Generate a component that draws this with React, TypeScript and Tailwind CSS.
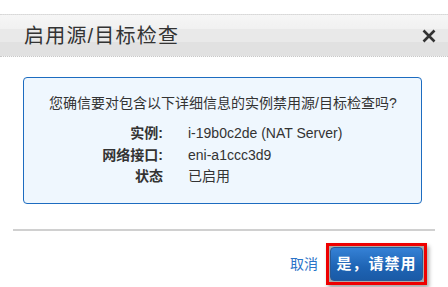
export default function App() {
  const font = { fontFamily: '"Liberation Sans", Arial, "Noto Sans CJK SC", sans-serif' };
  return (
    <div className="w-[448px] h-[287px] bg-white relative overflow-hidden" style={font}>
      <div className="h-[14px]" />
      <div className="h-[43px] border-t border-dotted border-t-[#d8d8d8] border-b border-b-[#c8c8c8] bg-[linear-gradient(#f6f6f6_0%,#f1f1f1_33%,#e9e9e9_34%,#e9e9e9_66%,#e1e1e1_67%,#e1e1e1_100%)] flex items-center justify-between pl-[24px] pr-[12px]">
        <span className="text-[20px] leading-none text-[#333] tracking-[1.2px]">启用源/目标检查</span>
        <svg width="14" height="14" viewBox="0 0 14 14" className="mr-[0px]">
          <path d="M1.5 1.5 L12.5 12.5 M12.5 1.5 L1.5 12.5" stroke="#333" strokeWidth="2.6" strokeLinecap="butt" />
        </svg>
      </div>
      <div className="pt-[20px] px-[23px]">
        <div className="w-[399px] h-[127px] border-[1.5px] border-[#1d6cc0] rounded-[4px] bg-[#eff7fe] pt-[15px] pl-[25px]">
          <div className="text-[14px] leading-[20px] text-[#333]">您确信要对包含以下详细信息的实例禁用源/目标检查吗?</div>
          <div className="mt-[10px] grid grid-cols-[114px_1fr] gap-x-[25px] text-[14px] leading-[21.5px] text-[#333]">
            <div className="text-right font-bold">实例:</div>
            <div>i-19b0c2de (NAT Server)</div>
            <div className="text-right font-bold">网络接口:</div>
            <div>eni-a1ccc3d9</div>
            <div className="text-right font-bold">状态</div>
            <div>已启用</div>
          </div>
        </div>
      </div>
      <div className="mt-[25px] mx-[13px] border-t-2 border-[#d0d0d0]" />
      <div className="mt-[12px] flex items-center justify-end pr-[21px]">
        <span className="text-[14px] text-[#2a73c8] mr-[8px]">取消</span>
        <div className="border-[3px] border-[#ee0000] p-[1px] bg-[#aaa] shadow-[2px_3px_4px_rgba(0,0,0,0.35)]">
          <div className="w-[93px] h-[34px] rounded-[4px] border border-[#2a5a95] bg-[linear-gradient(#3581d6,#1e64b4_60%,#1a5aa6)] flex items-center justify-center text-white font-bold text-[15px] tracking-[1px]">
            是，请禁用
          </div>
        </div>
      </div>
    </div>
  );
}
